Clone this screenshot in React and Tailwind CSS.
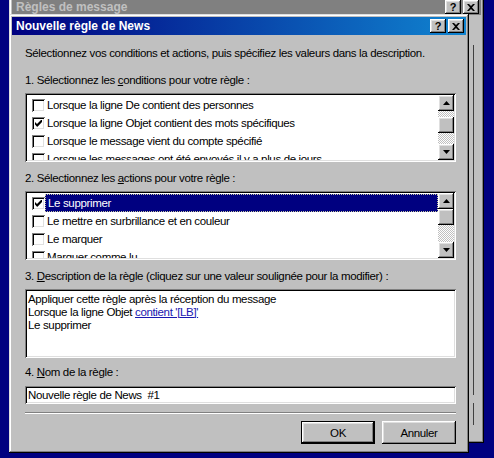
import React from "react";

const RAISED =
  "shadow-[inset_-1px_-1px_#000,inset_1px_1px_#fff,inset_-2px_-2px_#808080,inset_2px_2px_#dfdfdf]";
const SUNKEN =
  "shadow-[inset_1px_1px_#808080,inset_-1px_-1px_#fff,inset_2px_2px_#000,inset_-2px_-2px_#dfdfdf]";
const WINDOW =
  "shadow-[inset_-1px_-1px_#000,inset_1px_1px_#dfdfdf,inset_-2px_-2px_#808080,inset_2px_2px_#fff]";

function CloseGlyph() {
  return (
    <svg width="8" height="7" viewBox="0 0 8 7">
      <path d="M0 0h2l2 2 2-2h2L5 3.5 8 7H6L4 5 2 7H0l3-3.5z" fill="#000" />
    </svg>
  );
}

function TitleButtons() {
  return (
    <div className="flex gap-[2px]">
      <div className={`w-[16px] h-[14px] bg-[#c0c0c0] ${RAISED} flex items-center justify-center text-[11px] leading-none font-bold text-black tracking-normal`}>
        ?
      </div>
      <div className={`w-[16px] h-[14px] bg-[#c0c0c0] ${RAISED} flex items-center justify-center`}>
        <CloseGlyph />
      </div>
    </div>
  );
}

function Check({ checked }) {
  return (
    <span className={`w-[13px] h-[13px] bg-white shrink-0 ${SUNKEN} flex items-center justify-center`}>
      {checked && (
        <svg width="7" height="7" viewBox="0 0 7 7">
          <path d="M0 2 L2 4 L6 0 L7 0 L7 2 L2.5 6.8 L2 6.8 L0 4.6 Z" fill="#000" />
        </svg>
      )}
    </span>
  );
}

function Arrow({ up }) {
  return (
    <svg width="7" height="4" viewBox="0 0 7 4">
      {up ? <path d="M3.5 0 L7 4 L0 4 Z" fill="#000" /> : <path d="M0 0 L7 0 L3.5 4 Z" fill="#000" />}
    </svg>
  );
}

function ScrollBar({ thumbTop }) {
  return (
    <div className="w-[16px] shrink-0 flex flex-col">
      <div className={`h-[16px] bg-[#c0c0c0] ${RAISED} flex items-center justify-center`}>
        <Arrow up />
      </div>
      <div className="flex-1 bg-[repeating-conic-gradient(#c0c0c0_0%_25%,#fff_0%_50%)] bg-[length:2px_2px]">
        <div className={`h-[16px] bg-[#c0c0c0] ${RAISED} ${thumbTop}`} />
      </div>
      <div className={`h-[16px] bg-[#c0c0c0] ${RAISED} flex items-center justify-center`}>
        <Arrow />
      </div>
    </div>
  );
}

function ListBox({ items, thumbTop }) {
  return (
    <div className={`h-[69px] bg-white ${SUNKEN} p-[2px] flex overflow-hidden`}>
      <div className="flex-1 overflow-hidden pt-[1px]">
        {items.map((it, i) => (
          <div key={i} className="h-[18px] flex items-center pl-[5px]">
            <Check checked={it.checked} />
            <span
              className={
                it.selected
                  ? "flex-1 h-[18px] flex items-center pl-[2px] bg-[#000080] text-white border border-dotted border-[#c8c8a0]"
                  : "flex-1 pl-[2px] text-black whitespace-nowrap"
              }
            >
              {it.label}
            </span>
          </div>
        ))}
      </div>
      <ScrollBar thumbTop={thumbTop} />
    </div>
  );
}

export default function App() {
  const conditions = [
    { label: "Lorsque la ligne De contient des personnes" },
    { label: "Lorsque la ligne Objet contient des mots spécifiques", checked: true },
    { label: "Lorsque le message vient du compte spécifié" },
    { label: "Lorsque les messages ont été envoyés il y a plus de jours" },
  ];
  const actions = [
    { label: "Le supprimer", checked: true, selected: true },
    { label: "Le mettre en surbrillance et en couleur" },
    { label: "Le marquer" },
    { label: "Marquer comme lu" },
  ];

  return (
    <div className="relative w-[494px] h-[458px] overflow-hidden bg-[#000080] font-['Liberation_Sans',Arial,sans-serif] text-[11.5px] tracking-[-0.35px] leading-[14px] text-black">
      {/* Back window */}
      <div className={`absolute left-[9px] top-[-4px] w-[475px] h-[447px] bg-[#c0c0c0] ${WINDOW} p-[3px] flex flex-col`}>
        <div className="h-[16px] bg-[#808080] flex items-center justify-between pl-[4px] pr-[2px]">
          <span className="font-bold text-[12px] tracking-normal text-[#c0c0c0]">
            Règles de message
          </span>
          <TitleButtons />
        </div>
        <div className="flex-1 flex flex-col items-end pr-[7px] pt-[30px]">
          <div className="w-[40px] h-[350px] border-r border-[#404040]" />
          <div className="w-[40px] h-[22px] mt-[8px] border-r border-[#404040]" />
        </div>
      </div>

      {/* Front window */}
      <div className={`absolute left-[9px] top-[14px] w-[460px] h-[439px] bg-[#c0c0c0] ${WINDOW} p-[3px] flex flex-col`}>
        <div className="h-[18px] bg-[linear-gradient(to_right,#000080,#1084d0)] flex items-center justify-between pl-[4px] pr-[2px]">
          <span className="font-bold text-[12px] tracking-normal text-white">
            Nouvelle règle de News
          </span>
          <TitleButtons />
        </div>

        <div className="flex flex-col pl-[13px] pr-[10px]">
          <div className="mt-[11px] h-[14px] whitespace-nowrap">
            Sélectionnez vos conditions et actions, puis spécifiez les valeurs dans la description.
          </div>

          <div className="mt-[13px] h-[14px] whitespace-nowrap">
            1. Sélectionnez les <u>c</u>onditions pour votre règle :
          </div>
          <div className="mt-[6px]">
            <ListBox items={conditions} thumbTop="mt-[6px]" />
          </div>

          <div className="mt-[9px] h-[14px] whitespace-nowrap">
            2. Sélectionnez les <u>a</u>ctions pour votre règle :
          </div>
          <div className="mt-[6px]">
            <ListBox items={actions} thumbTop="mt-0" />
          </div>

          <div className="mt-[9px] h-[14px] whitespace-nowrap">
            3. <u>D</u>escription de la règle (cliquez sur une valeur soulignée pour la modifier) :
          </div>
          <div className={`mt-[6px] h-[69px] bg-white ${SUNKEN} pt-[4px] pl-[3px] leading-[13px]`}>
            <div>Appliquer cette règle après la réception du message</div>
            <div>
              Lorsque la ligne Objet <span className="text-[#1818b0] underline">contient '[LB]'</span>
            </div>
            <div>Le supprimer</div>
          </div>

          <div className="mt-[7px] h-[14px] whitespace-nowrap">
            4. <u>N</u>om de la règle :
          </div>
          <div className={`mt-[7px] h-[18px] bg-white ${SUNKEN} flex items-center pl-[3px] whitespace-pre`}>
            Nouvelle règle de News  #1
          </div>

          <div className="mt-[8px] h-[2px] border-t border-[#808080] border-b border-b-white" />

          <div className="mt-[7px] flex justify-end gap-[7px]">
            <div className="w-[74px] h-[23px] border border-black">
              <div className={`w-full h-full bg-[#c0c0c0] ${RAISED} flex items-center justify-center`}>OK</div>
            </div>
            <div className={`w-[74px] h-[23px] bg-[#c0c0c0] ${RAISED} flex items-center justify-center`}>
              Annuler
            </div>
          </div>
        </div>
      </div>
    </div>
  );
}
